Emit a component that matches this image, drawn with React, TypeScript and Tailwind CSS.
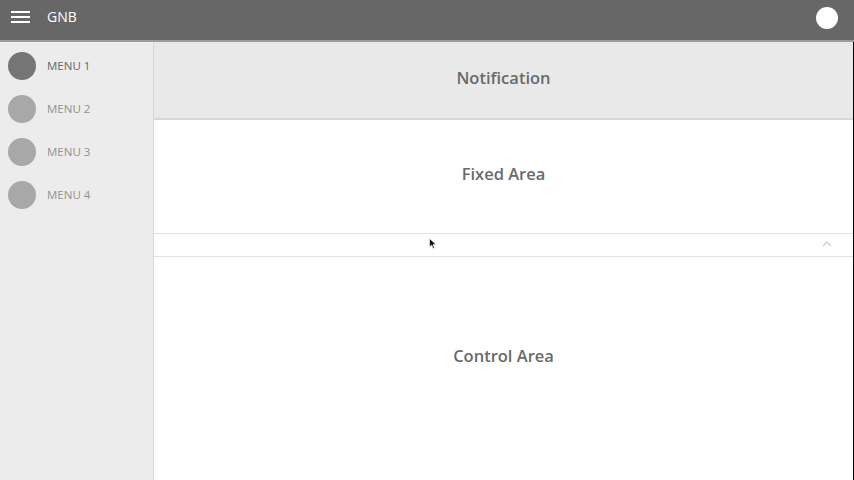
import React from "react";

const menus = ["MENU 1", "MENU 2", "MENU 3", "MENU 4"];

export default function App() {
  return (
    <div className="w-[854px] h-[480px] overflow-hidden flex flex-col bg-white" style={{ fontFamily: '"Open Sans", "Noto Sans", sans-serif' }}>
      <header className="h-[42px] shrink-0 bg-[#676767] border-b-2 border-[#9c9c9c] flex items-center pl-[11px] pr-[16px] pb-[6px]">
        <div className="flex flex-col gap-[3px] w-[19px]">
          <div className="h-[2px] bg-white" />
          <div className="h-[2px] bg-white" />
          <div className="h-[2px] bg-white" />
        </div>
        <div className="ml-[17px] text-white text-[14px] leading-none">GNB</div>
        <div className="ml-auto w-[22px] h-[22px] rounded-full bg-white mt-[2px]" />
      </header>
      <div className="flex flex-1 min-h-0">
        <aside className="w-[154px] shrink-0 bg-[#ececec] border-r border-[#d8d8d8] pt-[10px] flex flex-col gap-[15px] pl-[8px]">
          {menus.map((m, i) => (
            <div key={m} className="flex items-center h-[28px]">
              <div className={`w-[28px] h-[28px] rounded-full ${i === 0 ? "bg-[#757575]" : "bg-[#a8a8a8]"}`} />
              <span className={`ml-[11px] text-[11.5px] ${i === 0 ? "text-[#666666]" : "text-[#919191]"}`}>{m}</span>
            </div>
          ))}
        </aside>
        <main className="flex-1 flex flex-col border-r border-black relative">
          <div className="h-[78px] shrink-0 bg-[#e9e9e9] border-b-2 border-[#d6d6d6] flex items-center justify-center pb-[3px]">
            <span className="text-[16.5px] font-semibold text-[#6a6a6a]">Notification</span>
          </div>
          <div className="h-[113px] shrink-0 flex items-center justify-center pb-[4px]">
            <span className="text-[16.5px] font-semibold text-[#6a6a6a]">Fixed Area</span>
          </div>
          <div className="h-[24px] shrink-0 border-y border-[#e2e2e2] flex items-center justify-end pr-[21px] pb-[2px]">
            <svg width="10" height="6" viewBox="0 0 10 6" fill="none">
              <path d="M1 5 L5 1 L9 5" stroke="#c8c8c8" strokeWidth="1.2" />
            </svg>
          </div>
          <div className="flex-1 flex items-center justify-center pb-[25px]">
            <span className="text-[16.5px] font-semibold text-[#6a6a6a]">Control Area</span>
          </div>
          <svg className="absolute left-[275px] top-[196px]" width="8" height="12" viewBox="0 0 8 12">
            <path d="M0.5 0.5 L0.5 9 L2.6 7 L4.2 10.5 L5.5 9.9 L4 6.6 L7 6.6 Z" fill="#111" stroke="#fff" strokeWidth="0.6" />
          </svg>
        </main>
      </div>
    </div>
  );
}
